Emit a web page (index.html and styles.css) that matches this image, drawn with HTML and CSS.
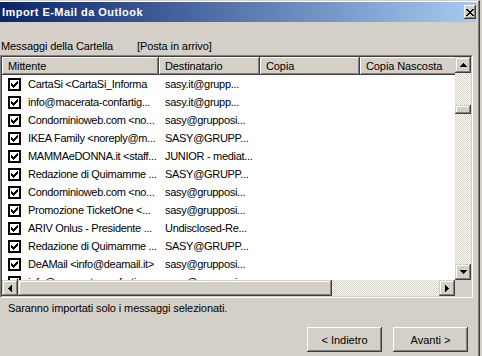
FILE: index.html
```html
<!DOCTYPE html>
<html lang="it">
<head>
  <meta charset="UTF-8" />
  <title>Import E-Mail da Outlook</title>
  <link rel="stylesheet" href="styles.css">
</head>
<body>
  <div class="window">
    <div class="titlebar">
      <span class="title">Import E-Mail da Outlook</span>
      <span class="close">
        <svg width="8" height="7" viewBox="0 0 8 7"><path d="M0 0h2v1H0zM6 0h2v1H6zM1 1h2v1H1zM5 1h2v1H5zM2 2h4v1H2zM3 3h2v1H3zM2 4h4v1H2zM1 5h2v1H1zM5 5h2v1H5zM0 6h2v1H0zM6 6h2v1H6z" fill="#000"/></svg>
      </span>
    </div>

    <div class="folder">
      <span class="folder-label">Messaggi della Cartella</span>
      <span>[Posta in arrivo]</span>
    </div>

    <div class="listbox">
      <div class="listbox-inner">
        <div class="list-main">
          <div class="list-view">
            <div class="header">
              <div class="hcell col-from">Mittente</div>
              <div class="hcell col-to">Destinatario</div>
              <div class="hcell col-cc">Copia</div>
              <div class="hcell col-bcc">Copia Nascosta</div>
            </div>
            <div class="rows" id="rows"></div>
          </div>
          <div class="vscroll">
            <div class="sbtn"><svg width="7" height="4" viewBox="0 0 7 4"><path d="M3 0h1v1H3zM2 1h3v1H2zM1 2h5v1H1zM0 3h7v1H0z"/></svg></div>
            <div class="vtrack"><div class="vthumb"></div></div>
            <div class="sbtn"><svg width="7" height="4" viewBox="0 0 7 4"><path d="M0 0h7v1H0zM1 1h5v1H1zM2 2h3v1H2zM3 3h1v1H3z"/></svg></div>
          </div>
        </div>
        <div class="hscroll">
          <div class="sbtn"><svg width="4" height="7" viewBox="0 0 4 7"><path d="M3 0h1v7H3zM2 1h1v5H2zM1 2h1v3H1zM0 3h1v1H0z"/></svg></div>
          <div class="hthumb"></div>
          <div class="htrack"></div>
          <div class="sbtn"><svg width="4" height="7" viewBox="0 0 4 7"><path d="M0 0h1v7H0zM1 1h1v5H1zM2 2h1v3H2zM3 3h1v1H3z"/></svg></div>
          <div class="corner"></div>
        </div>
      </div>
    </div>

    <p class="note">Saranno importati solo i messaggi selezionati.</p>

    <div class="buttons">
      <button type="button">&lt; Indietro</button>
      <button type="button">Avanti &gt;</button>
    </div>
  </div>

  <script>
    // messaggi della cartella, gia' accorciati come nella lista
    const messages = [
      ['CartaSi <CartaSi_Informa', 'sasy.it@grupp...'],
      ['info@macerata-confartig...', 'sasy.it@grupp...'],
      ['Condominioweb.com <no...', 'sasy@grupposi...'],
      ['IKEA Family <noreply@m...', 'SASY@GRUPP...'],
      ['MAMMAeDONNA.it <staff...', 'JUNIOR - mediat...'],
      ['Redazione di Quimamme ...', 'SASY@GRUPP...'],
      ['Condominioweb.com <no...', 'sasy@grupposi...'],
      ['Promozione TicketOne <...', 'sasy@grupposi...'],
      ['ARIV Onlus - Presidente ...', 'Undisclosed-Re...'],
      ['Redazione di Quimamme ...', 'SASY@GRUPP...'],
      ['DeAMail <info@deamail.it>', 'sasy@grupposi...'],
      ['info@macerata-confartig...', 'sasy@grupposi...']
    ];

    const esc = (s) => s.replace(/</g, '&lt;').replace(/>/g, '&gt;');
    const check = '<span class="check"><svg width="7" height="7" viewBox="0 0 7 7"><path d="M0.5 2v3M1.5 3v3M2.5 4v3M3.5 3v3M4.5 2v3M5.5 1v3M6.5 0v3" stroke="#000"/></svg></span>';
    const rows = document.getElementById('rows');
    messages.forEach(([from, to]) => {
      const row = document.createElement('div');
      row.className = 'row';
      row.innerHTML = `
        <div class="cell col-from">${check}<span class="text">${esc(from)}</span></div>
        <div class="cell col-to"><span class="text">${esc(to)}</span></div>
        <div class="cell col-cc"></div>
        <div class="cell col-bcc"></div>
      `;
      rows.appendChild(row);
    });
  </script>
</body>
</html>
```

FILE: styles.css
```css
body { margin: 0; background: #d4d0c8; font: 11px "Liberation Sans", Arial, sans-serif; letter-spacing: -0.1px; color: #000; }
.window { width: 480px; height: 356px; box-sizing: border-box; background: #d4d0c8; border-top: 1px solid #d4d0c8; border-right: 1px solid #404040; box-shadow: inset -1px 0 #808080, inset 0 1px #fff; padding-top: 1px; overflow: hidden; }

.titlebar { height: 20px; margin-right: 3px; padding-left: 2px; display: flex; align-items: center; justify-content: space-between; background: linear-gradient(to right, #0a246a, #a6caf0); color: #fff; font-weight: bold; letter-spacing: 0.45px; }
.close { width: 12px; height: 14px; display: flex; align-items: center; justify-content: center; background: #d4d0c8; box-shadow: inset -1px -1px #404040, inset 1px 1px #fff, inset -2px -2px #808080; }

.folder { display: flex; margin-top: 18px; padding-left: 1px; height: 13px; line-height: 13px; }
.folder-label { width: 136px; }

.listbox { margin-top: 2px; width: 473px; height: 243px; box-sizing: border-box; border: 1px solid; border-color: #808080 #fff #fff #808080; }
.listbox-inner { height: 100%; box-sizing: border-box; border: 1px solid; border-color: #404040 #d4d0c8 #d4d0c8 #404040; display: flex; flex-direction: column; background: #fff; }
.list-main { display: flex; height: 223px; }
.list-view { flex: 1; min-width: 0; overflow: hidden; background: #fff; }

.header { display: flex; height: 18px; background: #d4d0c8; }
.hcell { flex: none; box-sizing: border-box; padding-left: 6px; line-height: 18px; white-space: nowrap; box-shadow: inset -1px -1px #404040, inset 1px 1px #fff, inset -2px -2px #808080; }
.col-from { width: 157px; }
.col-to { width: 101px; }
.col-cc { width: 100px; }
.col-bcc { width: 250px; }

.row { display: flex; height: 18px; align-items: center; letter-spacing: -0.3px; }
.cell { flex: none; box-sizing: border-box; display: flex; align-items: center; padding: 0 0 0 6px; white-space: nowrap; overflow: hidden; }
.text { min-width: 0; }
.check { flex: none; width: 13px; height: 13px; box-sizing: border-box; border: 2px solid #000; background: #fff; display: flex; align-items: center; justify-content: center; margin-right: 7px; }
.check svg { display: block; }

.sbtn { flex: none; width: 16px; height: 16px; box-sizing: border-box; display: flex; align-items: center; justify-content: center; background: #d4d0c8; box-shadow: inset -1px -1px #404040, inset 1px 1px #d4d0c8, inset -2px -2px #808080, inset 2px 2px #fff; }
.sbtn svg { display: block; }
.vscroll { flex: none; width: 16px; display: flex; flex-direction: column; }
.vtrack, .htrack { flex: 1; background: repeating-conic-gradient(#fff 0 25%, #d4d0c8 0 50%) 0 0 / 2px 2px; }
.vthumb { height: 9px; margin-top: 32px; background: #d4d0c8; box-shadow: inset -1px -1px #404040, inset 1px 1px #d4d0c8, inset -2px -2px #808080, inset 2px 2px #fff; }

.hscroll { display: flex; height: 16px; flex: none; }
.hthumb { width: 314px; background: #d4d0c8; box-shadow: inset -1px -1px #404040, inset 1px 1px #d4d0c8, inset -2px -2px #808080, inset 2px 2px #fff; }
.corner { width: 16px; background: #d4d0c8; }

.note { margin: 4px 0 0; padding-left: 8px; height: 13px; line-height: 13px; }

.buttons { display: flex; justify-content: flex-end; gap: 11px; padding-right: 11px; margin-top: 12px; }
.buttons button { width: 75px; height: 25px; padding: 0; border: 0; background: #d4d0c8; font: inherit; color: #000; box-shadow: inset -1px -1px #404040, inset 1px 1px #fff, inset -2px -2px #808080, inset 2px 2px #d4d0c8; }
```
